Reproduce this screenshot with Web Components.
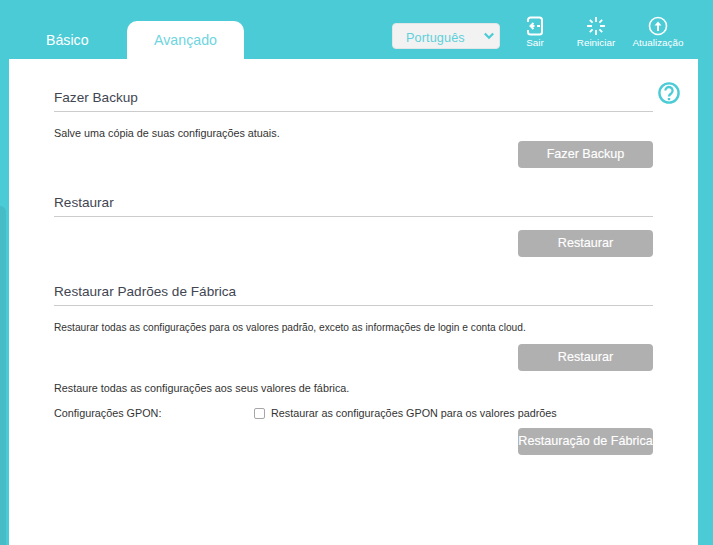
<!DOCTYPE html>
<html lang="pt">
<head>
<meta charset="utf-8">
<title>Backup</title>
<style>
  html, body { margin: 0; height: 100%; }
  body {
    background: #4acbd6;
    font-family: "Liberation Sans", Arial, sans-serif;
    color: #333;
    overflow: hidden;
  }
</style>
</head>
<body>
<router-page>
  <router-header slot="header"></router-header>
  <page-section title="Fazer Backup" style="height:105px">
    <note-text top="14">Salve uma cópia de suas configurações atuais.</note-text>
    <action-button top="1">Fazer Backup</action-button>
  </page-section>
  <page-section title="Restaurar" style="height:89px">
    <action-button top="13">Restaurar</action-button>
  </page-section>
  <page-section title="Restaurar Padrões de Fábrica">
    <note-text top="15" size="10.2">Restaurar todas as configurações para os valores padrão, exceto as informações de login e conta cloud.</note-text>
    <action-button top="9">Restaurar</action-button>
    <note-text top="10">Restaure todas as configurações aos seus valores de fábrica.</note-text>
    <check-row label="Configurações GPON:">Restaurar as configurações GPON para os valores padrões</check-row>
    <action-button top="7">Restauração de Fábrica</action-button>
  </page-section>
</router-page>

<script>
class RouterPage extends HTMLElement {
  constructor() {
    super();
    this.attachShadow({ mode: "open" });
    this.shadowRoot.innerHTML = `
      <style>
        :host { display: block; position: relative; height: 545px; overflow: hidden; }
        .rail {
          position: absolute;
          left: 0;
          top: 206px;
          width: 6px;
          height: 339px;
          background: #45bcc6;
          border-radius: 0 6px 0 0;
        }
        main {
          margin: 0 15px 0 9px;
          height: 486px;
          padding: 26px 45px 0;
          box-sizing: border-box;
          background: #fff;
          position: relative;
        }
        svg { position: absolute; left: 648px; top: 22px; }
      </style>
      <slot name="header"></slot>
      <div class="rail"></div>
      <main>
        <svg width="24" height="24" viewBox="0 0 24 24" fill="none" stroke="#4acbd6" stroke-width="2.4">
          <circle cx="12" cy="12" r="9.6"/>
          <path d="M8.4 9.6a3.6 3.6 0 1 1 5.9 2.8c-1.3 1-2.3 1.5-2.3 3" stroke-width="2.3"/>
          <path d="M12 17v2.2" stroke-width="2.4"/>
        </svg>
        <slot></slot>
      </main>
    `;
  }
}

class RouterHeader extends HTMLElement {
  constructor() {
    super();
    this.attachShadow({ mode: "open" });
    this.shadowRoot.innerHTML = `
      <style>
        :host { display: flex; height: 59px; align-items: flex-end; color: #fff; }
        .tabs { display: flex; align-items: flex-end; margin-right: 148px; }
        .tab {
          height: 38px;
          line-height: 38px;
          font-size: 14.2px;
          text-align: center;
        }
        .basic { width: 127px; box-sizing: border-box; padding-left: 46px; text-align: left; white-space: nowrap; }
        .active {
          width: 117px;
          background: #fff;
          color: #6fd5de;
          border-radius: 10px 10px 0 0;
        }
        .lang {
          display: flex;
          align-items: center;
          justify-content: space-between;
          width: 108px;
          height: 26px;
          box-sizing: border-box;
          padding: 0 3px 0 13px;
          margin-bottom: 10px;
          background: #f2f2f2;
          border: 1px solid #e2e6e6;
          border-radius: 4px;
          color: #5fd0da;
          font-size: 12.7px;
          letter-spacing: .1px;
        }
        .lang span { padding-top: 3px; }
        .actions { display: flex; margin-left: 17px; height: 59px; }
        .action {
          display: flex;
          flex-direction: column;
          align-items: center;
          padding-top: 16px;
          box-sizing: border-box;
          font-size: 9.9px;
          white-space: nowrap;
        }
        .action svg { display: block; height: 20px; margin-bottom: 1px; }
        .exit { width: 36px; margin-right: 21px; }
        .restart { width: 44px; margin-right: 14px; }
        .update { width: 52px; }
      </style>
      <div class="tabs">
        <div class="tab basic">Básico</div>
        <div class="tab active">Avançado</div>
      </div>
      <div class="lang">
        <span>Português</span>
        <svg width="14" height="10" viewBox="0 0 14 10" fill="none" stroke="#4acbd6" stroke-width="2.2"><path d="M2.800 2.500L7 6.700l4.200-4.200"/></svg>
      </div>
      <div class="actions">
        <div class="action exit">
          <svg width="18" height="20" viewBox="0 0 18 20" fill="none" stroke="#fff" stroke-width="2">
            <path d="M2 6V4A2.500 2.500 0 0 1 4.500 1.500h9A2.500 2.500 0 0 1 16 4v12a2.500 2.500 0 0 1-2.500 2.500h-9A2.500 2.500 0 0 1 2 16v-2"/>
            <path d="M14 10h-3M8.500 10H4.500M7.500 7l-3 3 3 3"/>
          </svg>
          <span>Sair</span>
        </div>
        <div class="action restart">
          <svg width="20" height="20" viewBox="0 0 20 20" fill="none" stroke="#fff" stroke-width="1.800">
            <path d="M10 1v5M10 14v5M1 10h5M14 10h5M3.800 3.800l2.800 2.800M16.200 3.800l-2.800 2.800M3.800 16.200l2.800-2.800M16.200 16.200l-2.800-2.800"/>
          </svg>
          <span>Reiniciar</span>
        </div>
        <div class="action update">
          <svg width="20" height="20" viewBox="0 0 20 20" fill="none" stroke="#fff">
            <circle cx="10" cy="10" r="8.500" stroke-width="1.600"/>
            <path d="M10 15V7" stroke-width="2"/>
            <path d="M6.500 9.500L10 5.500l3.500 4z" fill="#fff" stroke="none"/>
          </svg>
          <span>Atualização</span>
        </div>
      </div>
    `;
  }
}

class PageSection extends HTMLElement {
  constructor() {
    super();
    this.attachShadow({ mode: "open" });
    this.shadowRoot.innerHTML = `
      <style>
        :host { display: block; }
        h3 {
          margin: 0;
          height: 26px;
          line-height: 26px;
          font-size: 13.6px;
          font-weight: normal;
          color: #3f4652;
          border-bottom: 1px solid #ccc;
        }
      </style>
      <h3>${this.getAttribute("title")}</h3>
      <slot></slot>
    `;
  }
}

class NoteText extends HTMLElement {
  constructor() {
    super();
    this.attachShadow({ mode: "open" });
    this.shadowRoot.innerHTML = `
      <style>
        :host {
          display: block;
          font-size: ${this.getAttribute("size") || 10.8}px;
          line-height: 14px;
          color: #333;
          margin-top: ${this.getAttribute("top") || 0}px;
          white-space: nowrap;
        }
      </style>
      <slot></slot>
    `;
  }
}

class ActionButton extends HTMLElement {
  constructor() {
    super();
    this.attachShadow({ mode: "open" });
    this.shadowRoot.innerHTML = `
      <style>
        :host { display: flex; justify-content: flex-end; margin-top: ${this.getAttribute("top") || 0}px; }
        button {
          width: 135px;
          height: 27px;
          padding: 0 0 2px;
          border: 0;
          border-radius: 4px;
          background: #b0b0b0;
          color: #fff;
          font: 12.6px "Liberation Sans", Arial, sans-serif;
          -webkit-text-stroke: .15px #fff;
          white-space: nowrap;
        }
      </style>
      <button><slot></slot></button>
    `;
  }
}

class CheckRow extends HTMLElement {
  constructor() {
    super();
    this.attachShadow({ mode: "open" });
    this.shadowRoot.innerHTML = `
      <style>
        :host {
          display: flex;
          align-items: center;
          height: 16px;
          margin-top: 10px;
          font-size: 10.8px;
          color: #333;
          white-space: nowrap;
        }
        .label { width: 200px; }
        .box {
          width: 9px;
          height: 9px;
          margin-right: 6px;
          border: 1px solid #a6a6a6;
          border-radius: 2px;
          background: #fff;
        }
      </style>
      <span class="label">${this.getAttribute("label")}</span>
      <span class="box"></span>
      <slot></slot>
    `;
  }
}

customElements.define("router-page", RouterPage);
customElements.define("router-header", RouterHeader);
customElements.define("page-section", PageSection);
customElements.define("note-text", NoteText);
customElements.define("action-button", ActionButton);
customElements.define("check-row", CheckRow);
</script>
</body>
</html>
